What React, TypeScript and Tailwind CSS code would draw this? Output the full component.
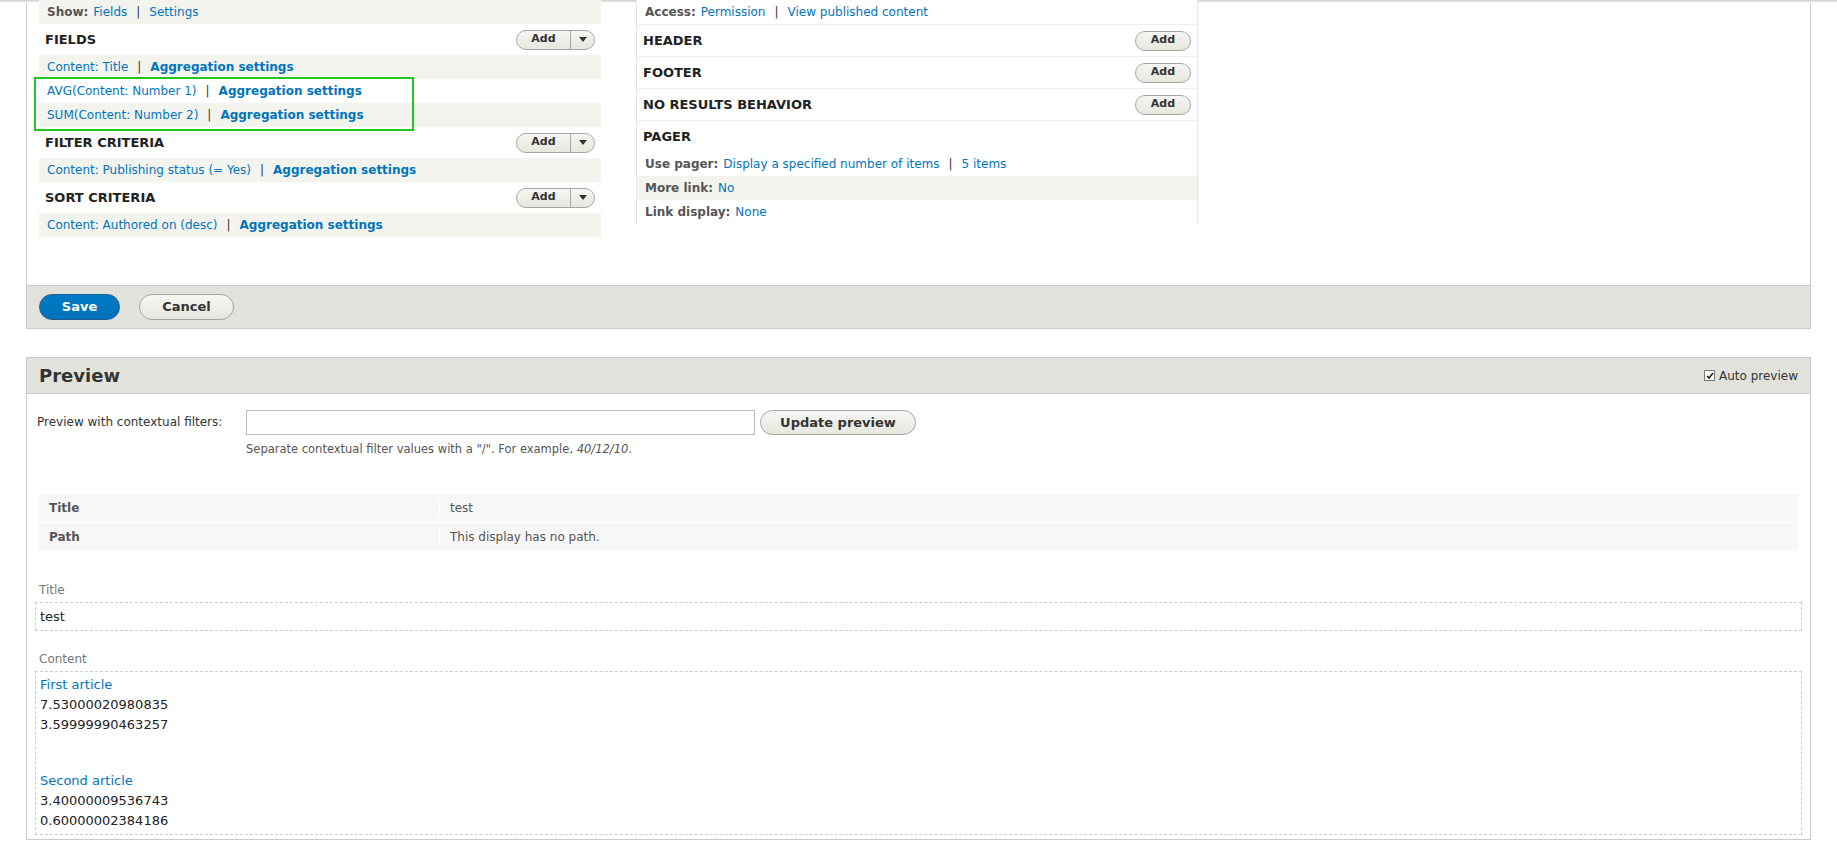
const link = "text-[#0074bd]";

function Sep() {
  return <span className="mx-[9px] text-[#333]">|</span>;
}

function AddBtn({ drop = true }: { drop?: boolean }) {
  return (
    <div className="flex h-[20px] items-stretch overflow-hidden rounded-full border border-[#a6a6a6] bg-gradient-to-b from-[#f6f6f3] to-[#e7e7df] text-[11px] font-bold text-[#333]">
      <span className={drop ? "flex w-[53px] items-center justify-center" : "flex w-[54px] items-center justify-center"}>Add</span>
      {drop && (
        <span className="flex w-[24px] items-center justify-center border-l border-[#a6a6a6]">
          <svg width="8" height="5" viewBox="0 0 8 5"><path d="M0 0h8L4 5z" fill="#333" /></svg>
        </span>
      )}
    </div>
  );
}

function Head({ title, drop = true, btn = true }: { title: string; drop?: boolean; btn?: boolean }) {
  return (
    <div className="flex h-[31px] items-center justify-between px-[6px] text-[13px] font-bold text-[#222]">
      <span>{title}</span>
      {btn && <AddBtn drop={drop} />}
    </div>
  );
}

function Row({ gray, children }: { gray?: boolean; children: React.ReactNode }) {
  return (
    <div className={`flex h-[24px] items-center px-[8px] text-[12px] ${gray ? "bg-[#f3f4ee]" : "bg-white"}`}>{children}</div>
  );
}

function Agg({ label }: { label: string }) {
  return (
    <>
      <span className={link}>{label}</span>
      <Sep />
      <span className={`${link} font-bold`}>Aggregation settings</span>
    </>
  );
}

export default function App() {
  return (
    <div className="min-h-[858px] bg-white text-[#333]" style={{ fontFamily: "'DejaVu Sans', sans-serif" }}>
      <div className="h-[3px] bg-gradient-to-b from-[#ccc] to-white" />
      <div className="mx-[26px] border-x border-b border-[#ccc]">
        <div className="flex h-[282px] gap-[35px] pl-[12px]">
          <div className="w-[562px] -mt-[3px]">
            <Row gray>
              <span className="font-bold text-[#555] mr-[5px]">Show:</span>
              <span className={link}>Fields</span>
              <Sep />
              <span className={link}>Settings</span>
            </Row>
            <Head title="FIELDS" />
            <Row gray><Agg label="Content: Title" /></Row>
            <div className="relative">
              <div className="absolute left-[-5px] top-[-2px] h-[54px] w-[380px] border-[2px] border-[#22c722]" />
              <Row><Agg label="AVG(Content: Number 1)" /></Row>
              <Row gray><Agg label="SUM(Content: Number 2)" /></Row>
            </div>
            <Head title="FILTER CRITERIA" />
            <Row gray><Agg label="Content: Publishing status (= Yes)" /></Row>
            <Head title="SORT CRITERIA" />
            <Row gray><Agg label="Content: Authored on (desc)" /></Row>
          </div>
          <div className="h-[224px] w-[562px] border-x border-b border-[#e6e6e6] -mt-[3px]">
            <div className="border-b border-[#eee]">
              <Row>
                <span className="font-bold text-[#555] mr-[5px]">Access:</span>
                <span className={link}>Permission</span>
                <Sep />
                <span className={link}>View published content</span>
              </Row>
            </div>
            <div className="border-b border-[#eee]"><Head title="HEADER" drop={false} /></div>
            <div className="border-b border-[#eee]"><Head title="FOOTER" drop={false} /></div>
            <div className="border-b border-[#eee]"><Head title="NO RESULTS BEHAVIOR" drop={false} /></div>
            <Head title="PAGER" btn={false} />
            <Row>
              <span className="font-bold text-[#555] mr-[5px]">Use pager:</span>
              <span className={link}>Display a specified number of items</span>
              <Sep />
              <span className={link}>5 items</span>
            </Row>
            <Row gray>
              <span className="font-bold text-[#555] mr-[5px]">More link:</span>
              <span className={link}>No</span>
            </Row>
            <Row>
              <span className="font-bold text-[#555] mr-[5px]">Link display:</span>
              <span className={link}>None</span>
            </Row>
          </div>
        </div>
        <div className="flex h-[43px] items-center gap-[19px] border-t border-[#ccc] bg-[#e1e2dc] pl-[12px]">
          <button className="h-[26px] w-[81px] rounded-full border border-[#1e5c90] bg-gradient-to-b from-[#007bc6] to-[#0071b8] text-[13px] font-bold text-white">Save</button>
          <button className="h-[26px] w-[95px] rounded-full border border-[#a6a6a6] bg-gradient-to-b from-[#f6f6f3] to-[#e7e7df] text-[13px] font-bold text-[#333]">Cancel</button>
        </div>
      </div>

      <div className="mx-[26px] mt-[28px] h-[483px] border border-[#ccc]">
        <div className="flex h-[36px] items-center justify-between border-b border-[#ccc] bg-[#e1e2dc] px-[12px]">
          <span className="text-[18px] font-bold text-[#333]">Preview</span>
          <label className="flex items-center gap-[4px] text-[12px] text-[#333]">
            <span className="flex h-[11px] w-[11px] items-center justify-center border border-[#777] bg-white">
              <svg width="8" height="8" viewBox="0 0 8 8"><path d="M1 4l2 2 4-5" stroke="#222" strokeWidth="1.6" fill="none" /></svg>
            </span>
            Auto preview
          </label>
        </div>
        <div className="flex gap-[8px] pl-[10px] pt-[16px] text-[12px]">
          <span className="mt-[3px] w-[201px]">Preview with contextual filters:</span>
          <div>
            <div className="flex gap-[5px]">
              <div className="h-[25px] w-[509px] border border-[#bbb] bg-white" />
              <button className="h-[25px] w-[156px] rounded-full border border-[#a6a6a6] bg-gradient-to-b from-[#f6f6f3] to-[#e7e7df] text-[13px] font-bold">Update preview</button>
            </div>
            <div className="mt-[6px] text-[11.5px] text-[#555]">
              Separate contextual filter values with a "/". For example, <i>40/12/10</i>.
            </div>
          </div>
        </div>
        <div className="mx-[12px] mt-[36px] text-[12px]">
          <div className="flex h-[28px] items-center bg-[#f7f7f7]">
            <span className="w-[401px] border-r border-white pl-[10px] font-bold text-[#555]">Title</span>
            <span className="pl-[10px] text-[#555]">test</span>
          </div>
          <div className="flex h-[29px] items-center border-t border-white bg-[#f7f7f7]">
            <span className="w-[401px] border-r border-white pl-[10px] font-bold text-[#555]">Path</span>
            <span className="pl-[10px] text-[#555]">This display has no path.</span>
          </div>
        </div>
        <div className="mx-[8px] mt-[30px] text-[13px]">
          <div className="pl-[4px] text-[12px] text-[#777]">Title</div>
          <div className="mt-[3px] flex h-[29px] items-center border border-dashed border-[#ccc] px-[4px] text-[#222]">test</div>
          <div className="mt-[19px] pl-[4px] text-[12px] text-[#777]">Content</div>
          <div className="mt-[3px] h-[164px] border border-dashed border-[#ccc] px-[4px] pt-[3px] leading-[20px] text-[#222]">
            <div className={link}>First article</div>
            <div>7.53000020980835</div>
            <div>3.59999990463257</div>
            <div className="h-[36px]" />
            <div className={link}>Second article</div>
            <div>3.40000009536743</div>
            <div>0.60000002384186</div>
          </div>
        </div>
      </div>
    </div>
  );
}
